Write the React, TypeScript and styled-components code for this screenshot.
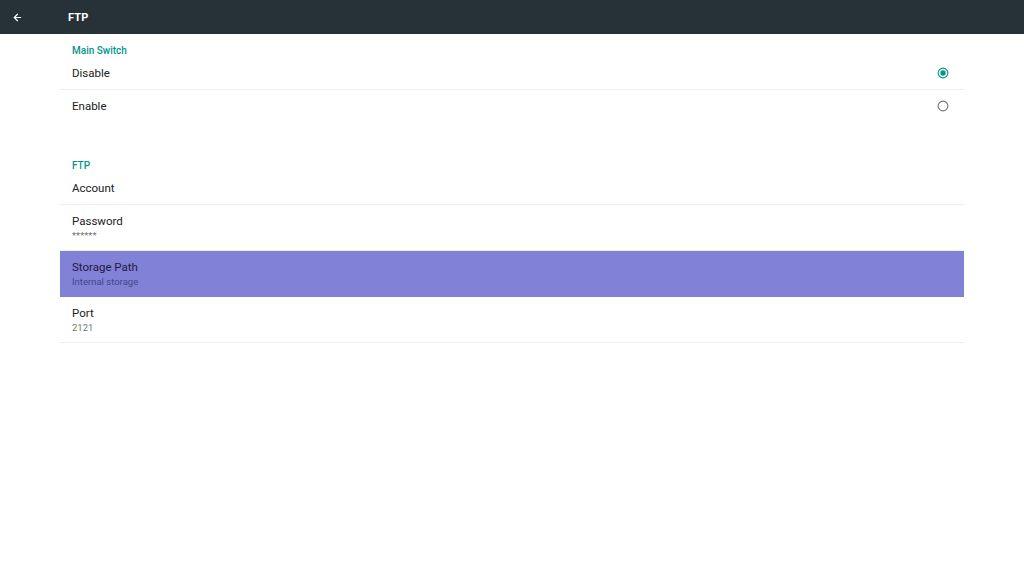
import React from "react";
import styled, { createGlobalStyle } from "styled-components";
import { ArrowLeft } from "lucide-react";

const GlobalStyle = createGlobalStyle`
  html, body {
    margin: 0;
    padding: 0;
    background: #ffffff;
    font-family: Roboto, "Noto Sans", "Liberation Sans", sans-serif;
  }
  * { box-sizing: border-box; }
`;

interface Pref {
  title: string;
  summary?: string;
  radio?: boolean;
  checked?: boolean;
  selected?: boolean;
  divider?: boolean;
}

interface Category {
  name: string;
  items: Pref[];
}

const categories: Category[] = [
  {
    name: "Main Switch",
    items: [
      { title: "Disable", radio: true, checked: true, divider: true },
      { title: "Enable", radio: true },
    ],
  },
  {
    name: "FTP",
    items: [
      { title: "Account", divider: true },
      { title: "Password", summary: "******", divider: true },
      { title: "Storage Path", summary: "Internal storage", selected: true },
      { title: "Port", summary: "2121", divider: true },
    ],
  },
];

const Radio: React.FC<{ checked?: boolean }> = ({ checked }) => (
  <RadioBox width="12" height="12" viewBox="0 0 12 12">
    <circle cx="6" cy="6" r="4.9" fill="none" stroke={checked ? "#009688" : "#757575"} strokeWidth="1.1" />
    {checked && <circle cx="6" cy="6" r="2.7" fill="#009688" />}
  </RadioBox>
);

const App: React.FC = () => {
  return (
    <Page>
      <GlobalStyle />
      <TopBar>
        <BackButton>
          <ArrowLeft size={11} strokeWidth={2.6} color="#ffffff" />
        </BackButton>
        <BarTitle>FTP</BarTitle>
      </TopBar>
      <List>
        {categories.map((cat, ci) => (
          <Section key={cat.name} first={ci === 0}>
            <CategoryTitle>{cat.name}</CategoryTitle>
            {cat.items.map((item) => (
              <Row
                key={item.title}
                selected={item.selected}
                divider={item.divider}
                twoLine={!!item.summary}
              >
                <RowText>
                  <RowTitle selected={item.selected}>{item.title}</RowTitle>
                  {item.summary && <RowSummary selected={item.selected}>{item.summary}</RowSummary>}
                </RowText>
                {item.radio && <Radio checked={item.checked} />}
              </Row>
            ))}
          </Section>
        ))}
      </List>
    </Page>
  );
};

export default App;

const Page = styled.div`
  width: 1024px;
  height: 576px;
  background: #ffffff;
  overflow: hidden;
`;

const TopBar = styled.div`
  height: 34px;
  background: #263238;
  display: flex;
  align-items: center;
`;

const BackButton = styled.div`
  width: 34px;
  height: 34px;
  display: flex;
  align-items: center;
  justify-content: center;
`;

const BarTitle = styled.div`
  margin-left: 34px;
  color: #ffffff;
  font-size: 11px;
  font-weight: 700;
  letter-spacing: 0.2px;
`;

const List = styled.div`
  margin-left: 60px;
  width: 904px;
  display: flex;
  flex-direction: column;
`;

const Section = styled.div<{ first?: boolean }>`
  display: flex;
  flex-direction: column;
  margin-top: ${(p) => (p.first ? "0" : "26px")};
`;

const CategoryTitle = styled.div`
  height: 23px;
  padding: 9.5px 0 0 12px;
  line-height: 14px;
  font-size: 10px;
  font-weight: 500;
  color: #009688;
`;

const Row = styled.div<{ selected?: boolean; divider?: boolean; twoLine?: boolean }>`
  display: flex;
  align-items: center;
  justify-content: space-between;
  height: ${(p) => (p.twoLine ? "46px" : "33px")};
  padding: 0 15px 0 12px;
  background: ${(p) => (p.selected ? "#8181d8" : "transparent")};
  border-bottom: 1px solid ${(p) => (p.divider ? "#eeeeee" : "transparent")};
`;

const RowText = styled.div`
  display: flex;
  flex-direction: column;
`;

const RowTitle = styled.div<{ selected?: boolean }>`
  font-size: 11.5px;
  line-height: 16px;
  color: ${(p) => (p.selected ? "#1c1c3c" : "#212121")};
`;

const RowSummary = styled.div<{ selected?: boolean }>`
  font-size: 9.5px;
  line-height: 13px;
  color: ${(p) => (p.selected ? "#45458a" : "#757575")};
`;

const RadioBox = styled.svg`
  display: block;
  flex: none;
`;
